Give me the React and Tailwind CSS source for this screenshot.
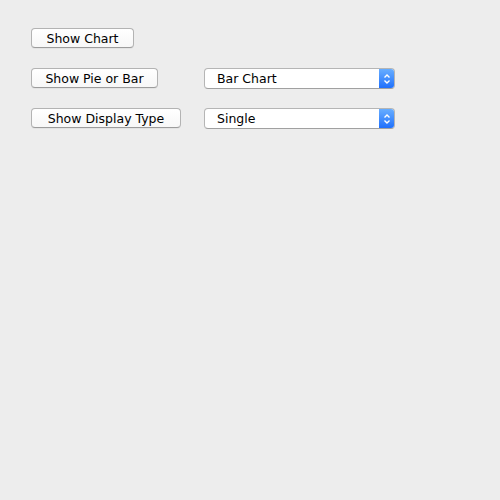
import { useState } from "react";

const BTN_CLS =
  "h-5 pt-[3px] rounded-[4px] border border-[#b3b3b3] border-b-[#9c9c9c] bg-gradient-to-b from-white to-[#f7f7f7] text-[12.5px] leading-none text-black shadow-[0_1px_0_rgba(0,0,0,0.04)] flex items-center justify-center";

function Select({ value, options, onChange }) {
  return (
    <div className="relative w-[191px] h-[21px]">
      <select
        value={value}
        onChange={(e) => onChange(e.target.value)}
        className="absolute inset-0 opacity-0 cursor-pointer"
      >
        {options.map((o) => (
          <option key={o}>{o}</option>
        ))}
      </select>
      <div className="pointer-events-none h-full flex rounded-[4px] border border-[#b5b5b5] border-b-[#a0a0a0] bg-white overflow-hidden">
        <div className="flex-1 flex items-center pt-px pl-[12px] text-[12.5px] text-black">{value}</div>
        <div className="w-[16px] -my-px -mr-px rounded-r-[4px] bg-gradient-to-b from-[#6bb0ff] to-[#1c6cfb] flex items-center justify-center">
          <svg width="8" height="12" viewBox="0 0 8 12" fill="none" stroke="white" strokeWidth="1.4">
            <path d="M1.5 4.5 L4 2 L6.5 4.5" />
            <path d="M1.5 7.5 L4 10 L6.5 7.5" />
          </svg>
        </div>
      </div>
    </div>
  );
}

export default function App() {
  const [chart, setChart] = useState("Bar Chart");
  const [display, setDisplay] = useState("Single");

  return (
    <div
      className="w-[500px] h-[500px] bg-[#ededed] pl-[31px] pt-[28px] flex flex-col gap-5"
      style={{ fontFamily: '"DejaVu Sans", "Liberation Sans", sans-serif' }}
    >
      <div className="flex">
        <button className={`${BTN_CLS} w-[103px]`}>Show Chart</button>
      </div>
      <div className="flex items-start h-5">
        <div className="w-[173px]">
          <button className={`${BTN_CLS} w-[127px]`}>Show Pie or Bar</button>
        </div>
        <Select value={chart} options={["Bar Chart", "Pie Chart"]} onChange={setChart} />
      </div>
      <div className="flex items-start h-5">
        <div className="w-[173px]">
          <button className={`${BTN_CLS} w-[150px]`}>Show Display Type</button>
        </div>
        <Select value={display} options={["Single", "Multiple"]} onChange={setDisplay} />
      </div>
    </div>
  );
}
